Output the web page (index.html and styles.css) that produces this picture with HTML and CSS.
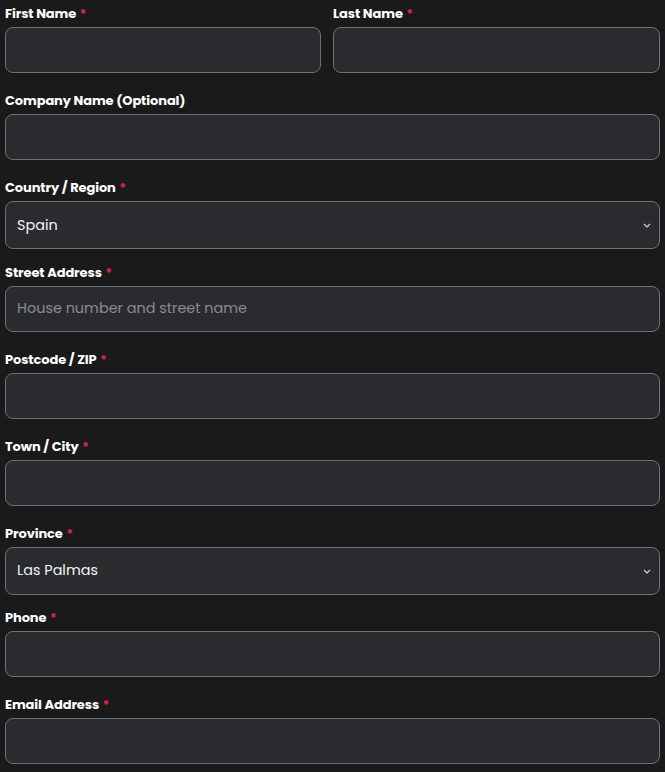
FILE: index.html
```html
<!DOCTYPE html>
<html lang="en">
<head>
<meta charset="utf-8">
<title>Billing details</title>
<link rel="stylesheet" href="styles.css">
</head>
<body>
<form class="form">
  <div class="row">
    <div class="field">
      <label class="label">First Name <span class="req">*</span></label>
      <div class="input"></div>
    </div>
    <div class="field">
      <label class="label">Last Name <span class="req">*</span></label>
      <div class="input"></div>
    </div>
  </div>
  <div class="field">
    <label class="label">Company Name (Optional)</label>
    <div class="input"></div>
  </div>
  <div class="field field-select">
    <label class="label">Country / Region <span class="req">*</span></label>
    <div class="input select"><span class="value">Spain</span><svg class="chev" width="8" height="5" viewBox="0 0 8 5"><path d="M1 1l3 3 3-3" fill="none" stroke="#d8d8d8" stroke-width="1.1"/></svg></div>
  </div>
  <div class="field">
    <label class="label">Street Address <span class="req">*</span></label>
    <div class="input"><span class="placeholder">House number and street name</span></div>
  </div>
  <div class="field">
    <label class="label">Postcode / ZIP <span class="req">*</span></label>
    <div class="input"></div>
  </div>
  <div class="field">
    <label class="label">Town / City <span class="req">*</span></label>
    <div class="input"></div>
  </div>
  <div class="field field-select">
    <label class="label">Province <span class="req">*</span></label>
    <div class="input select"><span class="value">Las Palmas</span><svg class="chev" width="8" height="5" viewBox="0 0 8 5"><path d="M1 1l3 3 3-3" fill="none" stroke="#d8d8d8" stroke-width="1.1"/></svg></div>
  </div>
  <div class="field">
    <label class="label">Phone <span class="req">*</span></label>
    <div class="input"></div>
  </div>
  <div class="field">
    <label class="label">Email Address <span class="req">*</span></label>
    <div class="input"></div>
  </div>
</form>
</body>
</html>
```
FILE: styles.css
```css
html, body {
  margin: 0;
  padding: 0;
  background: #1a1a1b;
}
body {
  font-family: Poppins, Inter, "Noto Sans", sans-serif;
  color: #ffffff;
}
.form {
  padding: 3px 5px 0 5px;
}
.row {
  display: grid;
  grid-template-columns: 316fr 327fr;
  column-gap: 12px;
}
.field {
  margin-bottom: 17px;
}
.field-select {
  margin-bottom: 12.5px;
}
.label {
  display: block;
  font-size: 13px;
  line-height: 20px;
  font-weight: 700;
  padding-top: 1px;
  margin-bottom: 3px;
  letter-spacing: -0.1px;
}
.req {
  color: #e2215a;
  font-size: 12px;
  margin-left: 1px;
}
.input {
  box-sizing: border-box;
  height: 46px;
  border: 1px solid #717174;
  border-radius: 8px;
  background: #2a2b2f;
  display: flex;
  align-items: center;
  padding: 0 11px;
  font-size: 14.4px;
}
.select {
  height: 48px;
  justify-content: space-between;
  padding-right: 8px;
}
.value {
  color: #f4f4f4;
}
.placeholder {
  color: #8c8c90;
}
.chev {
  margin-top: 1px;
}
```
